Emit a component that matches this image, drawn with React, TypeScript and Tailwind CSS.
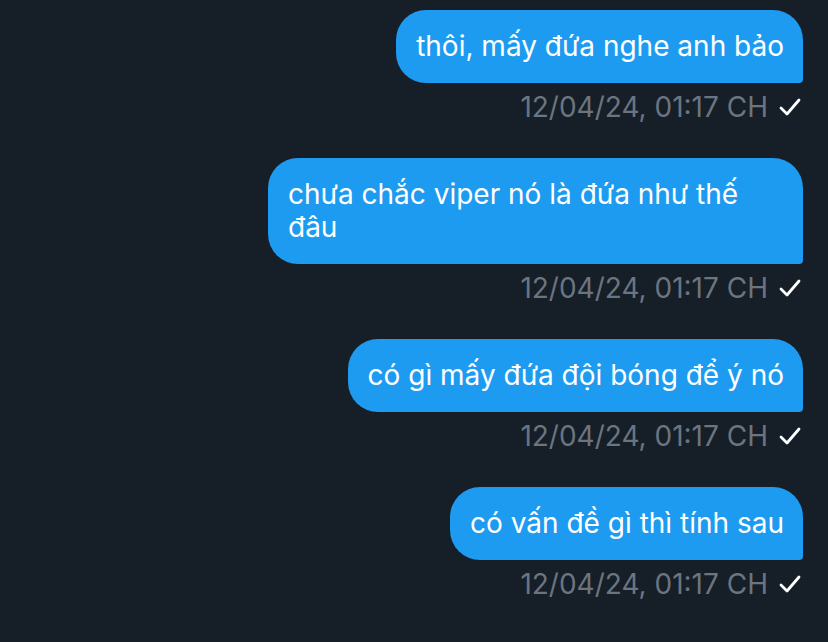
import React from 'react';

const messages = [
  'thôi, mấy đứa nghe anh bảo',
  'chưa chắc viper nó là đứa như thế đâu',
  'có gì mấy đứa đội bóng để ý nó',
  'có vấn đề gì thì tính sau',
];

const Check = () => (
  <svg width="22" height="20" viewBox="0 0 22 20" fill="none" className="ml-[11px]">
    <path d="M2 11 L8 17 L20 3" stroke="white" strokeWidth="2.8" strokeLinecap="round" strokeLinejoin="round" />
  </svg>
);

export default function App() {
  return (
    <div className="min-h-screen w-full bg-[#161e28] pt-[10px] pr-[25px] font-['Inter',sans-serif]">
      <div className="flex flex-col items-end">
        {messages.map((m, i) => (
          <div key={i} className="flex flex-col items-end mb-[36px]">
            <div className="max-w-[535px] rounded-[30px] rounded-br-[4px] bg-[#1d9bf0] pl-[20px] pr-[19px] py-[20px] text-[28px] leading-[33px] text-white">
              {m}
            </div>
            <div className="mt-[9px] mr-[2px] flex items-center text-[28px] leading-[30px] text-[#6b7580]">
              <span>12/04/24, 01:17 CH</span>
              <Check />
            </div>
          </div>
        ))}
      </div>
    </div>
  );
}
